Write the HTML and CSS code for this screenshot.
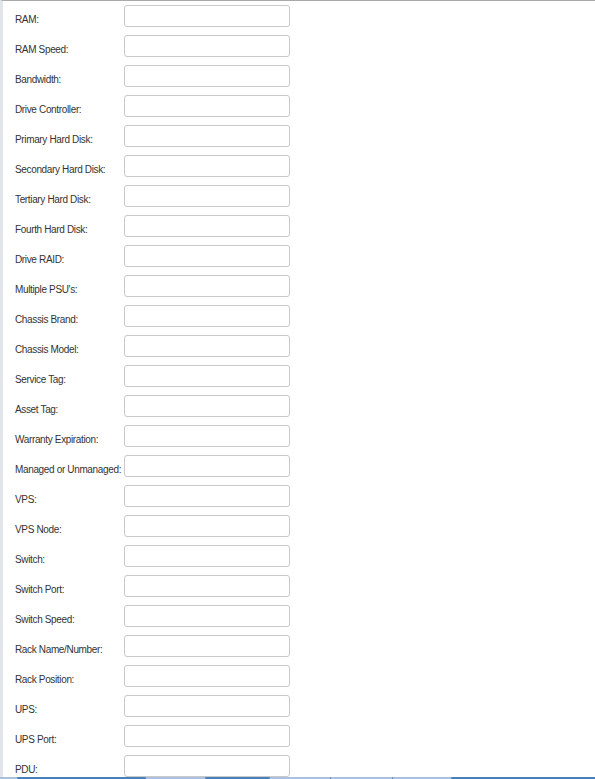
FILE: index.html
```html
<!DOCTYPE html>
<html lang="en">
<head>
    <meta charset="UTF-8">
    <meta name="viewport" content="width=device-width, initial-scale=1.0">
    <title>Server Details</title>
    <link rel="stylesheet" href="styles.css">
</head>
<body>

<div class="panel">
    <form class="details-form">
        <label for="ram">RAM:</label>
        <input type="text" id="ram">

        <label for="ramSpeed">RAM Speed:</label>
        <input type="text" id="ramSpeed">

        <label for="bandwidth">Bandwidth:</label>
        <input type="text" id="bandwidth">

        <label for="driveController">Drive Controller:</label>
        <input type="text" id="driveController">

        <label for="hdd1">Primary Hard Disk:</label>
        <input type="text" id="hdd1">

        <label for="hdd2">Secondary Hard Disk:</label>
        <input type="text" id="hdd2">

        <label for="hdd3">Tertiary Hard Disk:</label>
        <input type="text" id="hdd3">

        <label for="hdd4">Fourth Hard Disk:</label>
        <input type="text" id="hdd4">

        <label for="raid">Drive RAID:</label>
        <input type="text" id="raid">

        <label for="psu">Multiple PSU's:</label>
        <input type="text" id="psu">

        <label for="chassisBrand">Chassis Brand:</label>
        <input type="text" id="chassisBrand">

        <label for="chassisModel">Chassis Model:</label>
        <input type="text" id="chassisModel">

        <label for="serviceTag">Service Tag:</label>
        <input type="text" id="serviceTag">

        <label for="assetTag">Asset Tag:</label>
        <input type="text" id="assetTag">

        <label for="warranty">Warranty Expiration:</label>
        <input type="text" id="warranty">

        <label for="managed">Managed or Unmanaged:</label>
        <input type="text" id="managed">

        <label for="vps">VPS:</label>
        <input type="text" id="vps">

        <label for="vpsNode">VPS Node:</label>
        <input type="text" id="vpsNode">

        <label for="switch">Switch:</label>
        <input type="text" id="switch">

        <label for="switchPort">Switch Port:</label>
        <input type="text" id="switchPort">

        <label for="switchSpeed">Switch Speed:</label>
        <input type="text" id="switchSpeed">

        <label for="rackName">Rack Name/Number:</label>
        <input type="text" id="rackName">

        <label for="rackPosition">Rack Position:</label>
        <input type="text" id="rackPosition">

        <label for="ups">UPS:</label>
        <input type="text" id="ups">

        <label for="upsPort">UPS Port:</label>
        <input type="text" id="upsPort">

        <label for="pdu">PDU:</label>
        <input type="text" id="pdu">
    </form>
</div>

<div class="taskbar">
    <span class="tab tab-light" style="width:17px"></span>
    <span class="tab" style="width:127px"></span>
    <span class="tab tab-light" style="width:59px"></span>
    <span class="tab" style="width:63px"></span>
    <span class="tab tab-light" style="width:60px"></span>
    <span class="tab tab-light" style="width:61px"></span>
    <span class="tab tab-light" style="width:58px"></span>
    <span class="tab tab-last"></span>
</div>

</body>
</html>
```

FILE: styles.css
```css
body {
    margin: 0;
    font-family: "Liberation Sans", Arial, sans-serif;
    font-size: 10px;
    color: #333;
    background: #fff;
}

.panel {
    border-top: 1px solid #a9a9a9;
    border-left: 3px solid #e2e6ea;
    padding: 4px 0 0 12px;
    min-height: 800px;
}

.details-form {
    display: grid;
    grid-template-columns: 109px 166px;
    row-gap: 8px;
    align-items: start;
}

.details-form label {
    padding-top: 9px;
    white-space: nowrap;
    letter-spacing: -0.35px;
}

.details-form input {
    box-sizing: border-box;
    width: 166px;
    height: 22px;
    border: 1px solid #c9c9c9;
    border-radius: 3px;
    padding: 2px 4px;
    font: inherit;
}

.taskbar {
    position: fixed;
    left: 0;
    right: 0;
    bottom: 0;
    height: 2px;
    display: flex;
    background: #4a80b9;
}

.tab {
    display: block;
    height: 2px;
    background: #4a80b9;
    border-right: 1px solid #6b8fb5;
}

.tab-light {
    background: #a9c1dc;
}

.tab-last {
    flex: 1;
    border-right: 0;
}
```
